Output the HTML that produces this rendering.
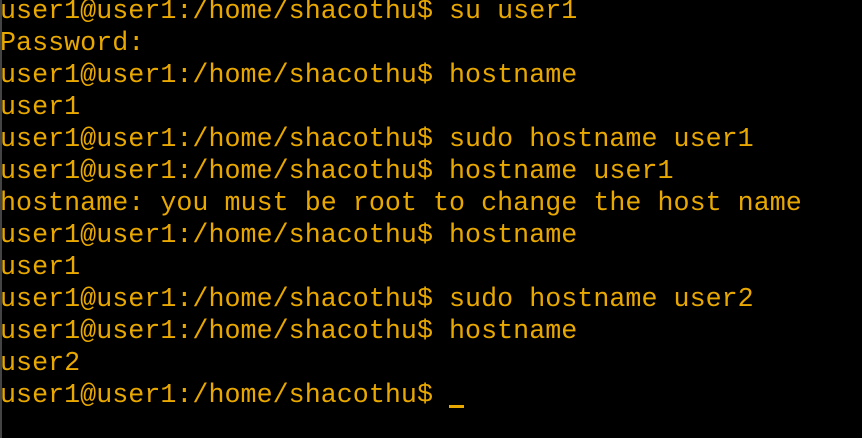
<!DOCTYPE html>
<html><head><style>
html,body{margin:0;padding:0;background:#000;width:862px;height:438px;overflow:hidden}
pre{margin:0;position:absolute;left:0;top:-4px;font-family:"Liberation Mono",monospace;font-size:26.67px;line-height:32px;letter-spacing:0.04px;color:#e8a800;white-space:pre}
.edge{position:absolute;left:0;top:0;width:2px;height:438px;background:#444}
.cur{display:inline-block;width:15px;height:3px;background:#e8a800;vertical-align:-6px}
</style></head><body>
<pre>user1@user1:/home/shacothu$ su user1
Password:
user1@user1:/home/shacothu$ hostname
user1
user1@user1:/home/shacothu$ sudo hostname user1
user1@user1:/home/shacothu$ hostname user1
hostname: you must be root to change the host name
user1@user1:/home/shacothu$ hostname
user1
user1@user1:/home/shacothu$ sudo hostname user2
user1@user1:/home/shacothu$ hostname
user2
user1@user1:/home/shacothu$ <span class="cur"></span></pre>
<div class="edge"></div>
</body></html>
